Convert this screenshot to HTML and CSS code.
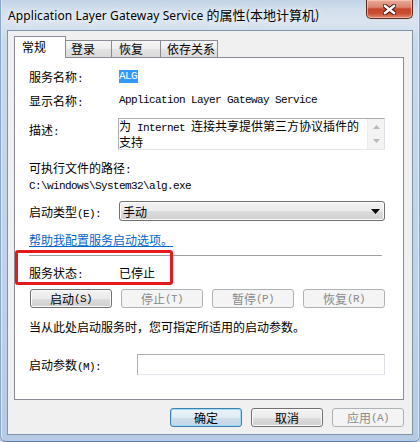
FILE: index.html
```html
<!DOCTYPE html>
<html lang="zh-CN">
<head>
<meta charset="utf-8">
<title>ALG 属性</title>
<link rel="stylesheet" href="styles.css">
</head>
<body>
<div class="window">
  <div class="titlebar">
    <span class="title">Application Layer Gateway Service <span class="title-cjk">的属性(本地计算机)</span></span>
    <div class="close">
      <svg width="13" height="11" viewBox="0 0 13 11">
        <g stroke-linecap="square">
          <line x1="2" y1="2" x2="11" y2="9" stroke="#3b1610" stroke-width="4.4"/>
          <line x1="11" y1="2" x2="2" y2="9" stroke="#3b1610" stroke-width="4.4"/>
          <line x1="2" y1="2" x2="11" y2="9" stroke="#ffffff" stroke-width="2.4"/>
          <line x1="11" y1="2" x2="2" y2="9" stroke="#ffffff" stroke-width="2.4"/>
        </g>
      </svg>
    </div>
  </div>
  <div class="client">
    <div class="tabs">
      <div class="tab active t1">常规</div>
      <div class="tab t2">登录</div>
      <div class="tab t3">恢复</div>
      <div class="tab t4">依存关系</div>
    </div>
    <div class="panel">
      <div class="row r1">
        <span class="label">服务名称<span class="m">:</span></span>
        <span class="m sel">ALG</span>
      </div>
      <div class="row r2">
        <span class="label">显示名称<span class="m">:</span></span>
        <span class="m">Application Layer Gateway Service</span>
      </div>
      <div class="row r3">
        <span class="label desc-label">描述<span class="m">:</span></span>
        <div class="textarea">
          <div class="ta-text">为<span class="m"> Internet </span>连接共享提供第三方协议插件的<br>支持</div>
          <div class="vscroll">
            <svg width="7" height="4" viewBox="0 0 7 4"><path d="M3.5 0 L7 4 L0 4 Z" fill="#b8b8b8"/></svg>
            <svg width="7" height="4" viewBox="0 0 7 4"><path d="M0 0 L7 0 L3.5 4 Z" fill="#b8b8b8"/></svg>
          </div>
        </div>
      </div>
      <div class="line path-label">可执行文件的路径<span class="m">:</span></div>
      <div class="line m path">C:\windows\System32\alg.exe</div>
      <div class="row r4">
        <span class="label">启动类型<span class="m">(E):</span></span>
        <div class="combo">
          <span>手动</span>
          <svg width="9" height="5" viewBox="0 0 9 5"><path d="M0 0 L9 0 L4.5 5 Z" fill="#000"/></svg>
        </div>
      </div>
      <div class="line link">帮助我配置服务启动选项。</div>
      <div class="sep"></div>
      <div class="row r5">
        <span class="label">服务状态<span class="m">:</span></span>
        <span>已停止</span>
      </div>
      <div class="btnrow">
        <div class="btn">启动<span class="m">(S)</span></div>
        <div class="btn disabled">停止<span class="m">(T)</span></div>
        <div class="btn disabled">暂停<span class="m">(P)</span></div>
        <div class="btn disabled">恢复<span class="m">(R)</span></div>
      </div>
      <div class="line hint">当从此处启动服务时，您可指定所适用的启动参数。</div>
      <div class="row r6">
        <span class="label wide">启动参数<span class="m">(M):</span></span>
        <div class="input"></div>
      </div>
      <div class="highlight"></div>
    </div>
    <div class="footer">
      <div class="btn default">确定</div>
      <div class="btn">取消</div>
      <div class="btn disabled">应用<span class="m">(A)</span></div>
    </div>
  </div>
</div>
</body>
</html>
```

FILE: styles.css
```css
* { box-sizing: border-box; }
html, body { margin: 0; padding: 0; }
body {
  width: 420px;
  height: 442px;
  overflow: hidden;
  font-family: "Noto Sans CJK SC", "Noto Sans", sans-serif;
  font-size: 12px;
  color: #000;
  background: #c3d5ea;
}
.window {
  width: 420px;
  height: 442px;
  display: flex;
  flex-direction: column;
  background: linear-gradient(180deg, #c2d3e6 0px, #d3dfec 10px, #d9e4ef 22px, #cbdaea 40px, #bdd1e7 70%, #b6cbe3 100%);
  box-shadow: inset 1px 0 0 #8aa6c8, inset -1px 0 0 #8aa6c8, inset 0 -1px 0 #5e7ea6, inset 2px 0 0 #dbe7f4, inset -2px 0 0 #dbe7f4;
  border-radius: 0 0 6px 6px;
}
.titlebar {
  height: 30px;
  flex: none;
  display: flex;
  justify-content: space-between;
  align-items: flex-start;
  padding-left: 8px;
}
.title {
  margin-top: 7px;
  line-height: 16px;
  font-family: "Noto Sans", "Noto Sans CJK SC", sans-serif;
  font-size: 12px;
  letter-spacing: 0.1px;
  color: #000;
  text-shadow: 0 0 6px #eef4fa, 0 0 3px #eef4fa;
  white-space: nowrap;
}
.title-cjk {
  font-family: "Noto Sans CJK SC", sans-serif;
  font-size: 13px;
  letter-spacing: 0;
}
.close {
  width: 47px;
  height: 19px;
  margin-right: 7px;
  border: 1px solid #5d2a22;
  border-top: none;
  border-radius: 0 0 5px 5px;
  background: linear-gradient(180deg, #e9a99b 0%, #dc8570 40%, #c7452d 50%, #c94f34 75%, #e08a6c 100%);
  box-shadow: inset 0 0 0 1px rgba(255, 210, 190, 0.6);
  display: flex;
  align-items: center;
  justify-content: center;
}
.client {
  height: 405px;
  margin: 0 7px;
  flex: none;
  border: 1px solid #7f93ab;
  background: #f0f0f0;
  padding: 5px 8px 0 6px;
  display: flex;
  flex-direction: column;
}
.tabs {
  display: flex;
  align-items: flex-end;
  height: 22px;
  margin-bottom: -1px;
  position: relative;
  z-index: 1;
}
.tab {
  height: 17px;
  margin-bottom: 1px;
  margin-left: -1px;
  border: 1px solid #898c95;
  border-bottom: none;
  background: linear-gradient(180deg, #f6f6f6 0%, #ededed 50%, #e3e3e3 50%, #dadada 100%);
  line-height: 15px;
  padding-left: 5px;
  white-space: nowrap;
}
.tab.active {
  height: 22px;
  margin-bottom: 0;
  margin-left: 0;
  background: #fff;
  padding-left: 7px;
  padding-top: 2px;
  position: relative;
  z-index: 2;
  border-radius: 1px 1px 0 0;
}
.t1 { width: 52px; }
.t2 { width: 47px; }
.t3 { width: 50px; padding-left: 7px; }
.t4 { width: 58px; padding-left: 6px; }
.panel {
  height: 343px;
  flex: none;
  border: 1px solid #898c95;
  background: #fff;
  padding: 8px 18px 0 14px;
  display: flex;
  flex-direction: column;
  position: relative;
}
.m {
  font-family: "Liberation Mono", monospace;
  font-size: 11px;
  letter-spacing: -0.6px;
}
.row { display: flex; align-items: center; }
.label { width: 90px; flex: none; white-space: nowrap; }
.label.wide { width: 108px; }
.line { line-height: 16px; white-space: nowrap; }
.r1 { height: 20px; }
.r2 { height: 20px; margin-top: 4px; }
.sel {
  background: #3399ff;
  color: #fff;
  line-height: 13px;
  padding-right: 0.6px;
}
.r3 { margin-top: 8px; align-items: flex-start; }
.desc-label { width: 89px; line-height: 16px; padding-top: 4px; }
.textarea {
  width: 267px;
  height: 32px;
  border: 1px solid #abadb3;
  border-right-color: #dbdfe6;
  border-bottom-color: #e3e9ef;
  display: flex;
}
.ta-text {
  flex: 1;
  line-height: 13px;
  padding-left: 0;
  white-space: nowrap;
}
.vscroll {
  width: 17px;
  flex: none;
  background: #f3f3f3;
  border-left: 1px solid #ececec;
  display: flex;
  flex-direction: column;
  justify-content: space-between;
  align-items: center;
  padding: 6px 0 6px;
}
.path-label { margin-top: 10px; }
.path { font-size: 11px; }
.r4 { margin-top: 7px; height: 20px; }
.combo {
  width: 266px;
  height: 20px;
  border: 1px solid #707070;
  border-radius: 3px;
  background: linear-gradient(180deg, #f2f2f2 0%, #ebebeb 50%, #dddddd 50%, #cfcfcf 100%);
  box-shadow: inset 0 0 0 1px #fcfcfc;
  display: flex;
  align-items: center;
  justify-content: space-between;
  padding: 0 4px 0 3px;
}
.link {
  margin-top: 11px;
  color: #0066cc;
  text-decoration: underline;
}
.sep {
  margin-top: 7px;
  height: 1px;
  width: 353px;
  background: #a0a0a0;
  flex: none;
}
.r5 { margin-top: 8px; height: 16px; }
.btnrow {
  margin-top: 9px;
  margin-left: 1px;
  display: flex;
  justify-content: space-between;
}
.btn {
  width: 82px;
  height: 19px;
  border: 1px solid #707070;
  border-radius: 3px;
  background: linear-gradient(180deg, #f2f2f2 0%, #ebebeb 50%, #dddddd 50%, #cfcfcf 100%);
  box-shadow: inset 0 0 0 1px #fcfcfc;
  display: flex;
  align-items: center;
  justify-content: center;
  line-height: 16px;
  white-space: nowrap;
}
.btn.disabled {
  border-color: #adb2b5;
  background: #f4f4f4;
  box-shadow: none;
  color: #8a8a8a;
}
.btn.default {
  border-color: #3c7fb1;
  background: linear-gradient(180deg, #eaf3f9 0%, #e0ebf4 50%, #cfdeeb 50%, #c4d7e8 100%);
  box-shadow: inset 0 0 0 1px #9fdcf7;
}
.hint { margin-top: 11px; }
.r6 { margin-top: 19px; height: 21px; }
.input {
  width: 248px;
  height: 21px;
  border: 1px solid #abadb3;
  border-right-color: #dbdfe6;
  border-bottom-color: #e3e9ef;
  background: #fff;
}
.highlight {
  position: absolute;
  left: 0;
  top: 192px;
  width: 158px;
  height: 35px;
  border: 3px solid #e3191c;
  border-radius: 3px;
  pointer-events: none;
}
.footer {
  margin-top: 8px;
  display: flex;
  justify-content: flex-end;
  gap: 9px;
}
.footer .btn { width: 72px; }
```
